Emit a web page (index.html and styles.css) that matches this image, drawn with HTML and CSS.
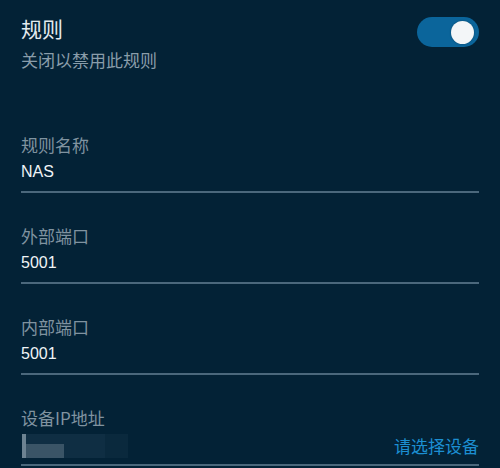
FILE: index.html
```html
<!DOCTYPE html>
<html lang="zh-CN">
<head>
<meta charset="utf-8">
<title>规则</title>
<link rel="stylesheet" href="styles.css">
</head>
<body>
<main class="rule-form">
  <header class="rule-head">
    <div class="rule-head-text">
      <h1 class="rule-title">规则</h1>
      <p class="rule-hint">关闭以禁用此规则</p>
    </div>
    <span class="switch is-on" role="switch" aria-checked="true"><span class="switch-knob"></span></span>
  </header>

  <section class="field">
    <div class="field-label">规则名称</div>
    <div class="field-value">NAS</div>
  </section>

  <section class="field">
    <div class="field-label">外部端口</div>
    <div class="field-value">5001</div>
  </section>

  <section class="field">
    <div class="field-label">内部端口</div>
    <div class="field-value">5001</div>
  </section>

  <section class="field">
    <div class="field-label">设备IP地址</div>
    <div class="field-value field-value-row">
      <span class="ip-mask"></span>
      <span class="pick-device">请选择设备</span>
    </div>
  </section>
</main>
</body>
</html>
```

FILE: styles.css
```css
html, body {
  margin: 0;
  padding: 0;
  background: #032236;
}

body {
  width: 500px;
  height: 468px;
  overflow: hidden;
  font-family: "Noto Sans CJK SC", "Liberation Sans", sans-serif;
}

.rule-form {
  padding: 14px 21px 0;
}

/* header: title, hint and the enable switch */
.rule-head {
  display: flex;
  justify-content: space-between;
  align-items: flex-start;
  height: 88px;
}

.rule-title {
  margin: 0;
  font-size: 21px;
  line-height: 28px;
  font-weight: 400;
  color: #e4ebef;
}

.rule-hint {
  margin: 6px 0 0;
  font-size: 17px;
  line-height: 24px;
  color: #8a9daa;
}

.switch {
  margin-top: 3px;
  width: 62px;
  height: 30px;
  border-radius: 15px;
  background: #0b659b;
  display: flex;
  align-items: center;
  justify-content: flex-end;
  padding: 0 5px;
  box-sizing: border-box;
}

.switch-knob {
  width: 23px;
  height: 23px;
  border-radius: 50%;
  background: #f3f6f8;
  box-shadow: 0 0 2px rgba(0, 0, 0, 0.35);
}

/* form rows with underline */
.field {
  padding: 31px 0 8px;
  border-bottom: 2px solid #4b687c;
}

.field-label {
  font-size: 17px;
  line-height: 24px;
  color: #8093a0;
}

.field-value {
  margin-top: 4px;
  font-family: "Liberation Sans", "Noto Sans CJK SC", sans-serif;
  font-size: 16px;
  line-height: 22px;
  color: #f0f4f6;
}

.field-value-row {
  display: flex;
  justify-content: space-between;
  align-items: flex-start;
  height: 22px;
}

/* masked address placeholder */
.ip-mask {
  width: 106px;
  height: 24px;
  margin-left: 1px;
  background:
    linear-gradient(#6d8392, #6d8392) 0 0 / 4px 24px no-repeat,
    linear-gradient(#3a5466, #3a5466) 4px 10px / 38px 14px no-repeat,
    linear-gradient(#0f2e43, #0f2e43) 4px 0 / 79px 24px no-repeat,
    linear-gradient(#0a293d, #0a293d) 83px 0 / 23px 24px no-repeat;
}

.pick-device {
  font-family: "Noto Sans CJK SC", sans-serif;
  font-size: 17px;
  line-height: 24px;
  color: #1c8fd2;
}
```
